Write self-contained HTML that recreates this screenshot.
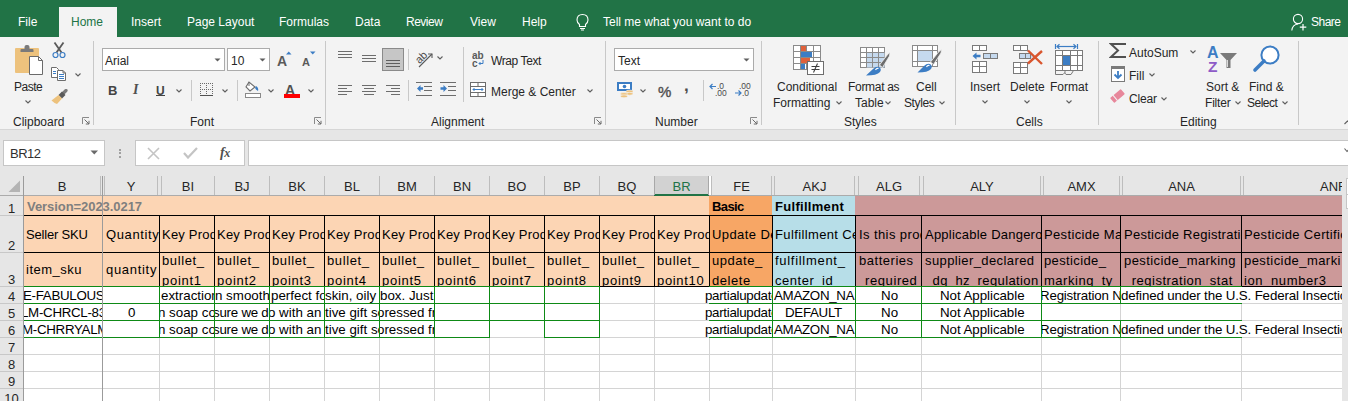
<!DOCTYPE html>
<html><head><meta charset="utf-8"><style>
html,body{margin:0;padding:0;}
body{width:1348px;height:401px;overflow:hidden;position:relative;background:#E6E6E6;font-family:"Liberation Sans",sans-serif;}
.t{position:absolute;line-height:1;white-space:pre;}
.r{position:absolute;display:block;}
.c{position:absolute;overflow:hidden;}
.c>span{position:absolute;line-height:1;white-space:pre;}
</style></head><body>
<div class="r" style="left:0px;top:0px;width:1348px;height:37px;background:#217346;"></div>
<div class="r" style="left:59px;top:7px;width:58px;height:30px;background:#F3F3F3;"></div>
<div class="t" style="left:18px;top:16px;font-size:12px;color:#FFFFFF;font-weight:400;">File</div>
<div class="t" style="left:131px;top:16px;font-size:12px;color:#FFFFFF;font-weight:400;">Insert</div>
<div class="t" style="left:187px;top:16px;font-size:12px;color:#FFFFFF;font-weight:400;">Page Layout</div>
<div class="t" style="left:279px;top:16px;font-size:12px;color:#FFFFFF;font-weight:400;">Formulas</div>
<div class="t" style="left:355px;top:16px;font-size:12px;color:#FFFFFF;font-weight:400;">Data</div>
<div class="t" style="left:406px;top:16px;font-size:12px;color:#FFFFFF;font-weight:400;letter-spacing:-0.5px">Review</div>
<div class="t" style="left:470px;top:16px;font-size:12px;color:#FFFFFF;font-weight:400;">View</div>
<div class="t" style="left:522px;top:16px;font-size:12px;color:#FFFFFF;font-weight:400;">Help</div>
<div class="t" style="left:603px;top:16px;font-size:12px;color:#FFFFFF;font-weight:400;">Tell me what you want to do</div>
<div class="t" style="left:1311px;top:16px;font-size:12px;color:#FFFFFF;font-weight:400;letter-spacing:-0.5px">Share</div>
<div class="t" style="left:71px;top:16px;font-size:12px;color:#217346;font-weight:400;">Home</div>
<div class="r" style="left:0px;top:37px;width:1348px;height:92px;background:#F3F3F3;"></div>
<div class="r" style="left:0px;top:129px;width:1348px;height:1px;background:#D6D6D6;"></div>
<div class="r" style="left:93px;top:41px;width:1px;height:84px;background:#C8C8C8;"></div>
<div class="r" style="left:325px;top:41px;width:1px;height:84px;background:#C8C8C8;"></div>
<div class="r" style="left:605px;top:41px;width:1px;height:84px;background:#C8C8C8;"></div>
<div class="r" style="left:761px;top:41px;width:1px;height:84px;background:#C8C8C8;"></div>
<div class="r" style="left:955px;top:41px;width:1px;height:84px;background:#C8C8C8;"></div>
<div class="r" style="left:1098px;top:41px;width:1px;height:84px;background:#C8C8C8;"></div>
<div class="r" style="left:1298px;top:41px;width:1px;height:84px;background:#C8C8C8;"></div>
<div class="t" style="left:13px;top:116px;font-size:12px;color:#262626;font-weight:400;">Clipboard</div>
<div class="t" style="left:190px;top:116px;font-size:12px;color:#262626;font-weight:400;">Font</div>
<div class="t" style="left:431px;top:116px;font-size:12px;color:#262626;font-weight:400;">Alignment</div>
<div class="t" style="left:655px;top:116px;font-size:12px;color:#262626;font-weight:400;">Number</div>
<div class="t" style="left:844px;top:116px;font-size:12px;color:#262626;font-weight:400;">Styles</div>
<div class="t" style="left:1016px;top:116px;font-size:12px;color:#262626;font-weight:400;">Cells</div>
<div class="t" style="left:1180px;top:116px;font-size:12px;color:#262626;font-weight:400;">Editing</div>
<svg class="r" style="left:82px;top:117px;" width="8" height="8" viewBox="0 0 8 8"><path d="M0.5,7 V0.5 H7" fill="none" stroke="#8A8A8A" stroke-width="1"/><path d="M2.5,2.5 L7,7 M7,3.8 V7 H3.8" fill="none" stroke="#6A6A6A" stroke-width="1"/></svg>
<svg class="r" style="left:314px;top:117px;" width="8" height="8" viewBox="0 0 8 8"><path d="M0.5,7 V0.5 H7" fill="none" stroke="#8A8A8A" stroke-width="1"/><path d="M2.5,2.5 L7,7 M7,3.8 V7 H3.8" fill="none" stroke="#6A6A6A" stroke-width="1"/></svg>
<svg class="r" style="left:594px;top:117px;" width="8" height="8" viewBox="0 0 8 8"><path d="M0.5,7 V0.5 H7" fill="none" stroke="#8A8A8A" stroke-width="1"/><path d="M2.5,2.5 L7,7 M7,3.8 V7 H3.8" fill="none" stroke="#6A6A6A" stroke-width="1"/></svg>
<svg class="r" style="left:750px;top:117px;" width="8" height="8" viewBox="0 0 8 8"><path d="M0.5,7 V0.5 H7" fill="none" stroke="#8A8A8A" stroke-width="1"/><path d="M2.5,2.5 L7,7 M7,3.8 V7 H3.8" fill="none" stroke="#6A6A6A" stroke-width="1"/></svg>
<svg class="r" style="left:1344px;top:120px;" width="7" height="5" viewBox="0 0 7 5"><polyline points="0.5,4 3.5,1 6.5,4" fill="none" stroke="#5F5F5F" stroke-width="1.1"/></svg>
<svg class="r" style="left:14px;top:44px;" width="30" height="32" viewBox="0 0 30 32">
<rect x="1" y="4" width="24" height="25" rx="1" fill="#EDC27D"/>
<path d="M6.5,8 V6 Q6.5,5 7.5,5 H10.5 V3 Q10.5,1 12.5,1 H13.5 Q15.5,1 15.5,3 V5 H18.5 Q19.5,5 19.5,6 V8 Z" fill="#7A7A7A"/>
<path d="M15.5,12.5 H24.5 L28.5,16.5 V30.5 H15.5 Z" fill="#FFFFFF" stroke="#6A6A6A" stroke-width="1"/>
<path d="M24.5,12.5 V16.5 H28.5" fill="none" stroke="#6A6A6A" stroke-width="1"/>
</svg>
<div class="t" style="left:14px;top:81px;font-size:12px;color:#262626;font-weight:400;letter-spacing:-0.5px">Paste</div>
<svg class="r" style="left:25px;top:100px;" width="6" height="4" viewBox="0 0 6 4"><polyline points="0.5,0.5 3.0,3 5.5,0.5" fill="none" stroke="#5F5F5F" stroke-width="1.1"/></svg>
<svg class="r" style="left:51px;top:42px;" width="16" height="17" viewBox="0 0 16 17">
<path d="M3.5,0.5 L10.5,10.5 M12.5,0.5 L5.5,10.5" stroke="#5A5A5A" stroke-width="1.8" fill="none"/>
<circle cx="4.5" cy="13" r="2.5" fill="#F3F3F3" stroke="#3C7DC4" stroke-width="1.2"/>
<circle cx="11.5" cy="13" r="2.5" fill="#F3F3F3" stroke="#3C7DC4" stroke-width="1.2"/>
</svg>
<svg class="r" style="left:50px;top:66px;" width="17" height="16" viewBox="0 0 17 16">
<path d="M1.5,1.5 H6.5 L8.5,3.5 V11.5 H1.5 Z" fill="#FFFFFF" stroke="#6D6D6D" stroke-width="1"/>
<path d="M7.5,4.5 H13 L15.5,7 V14.5 H7.5 Z" fill="#FFFFFF" stroke="#6D6D6D" stroke-width="1"/>
<path d="M13,4.5 V7 H15.5" fill="none" stroke="#6D6D6D" stroke-width="1"/>
<path d="M3,5.5 H6 M3,7.5 H6 M9,8.5 H14 M9,10.5 H14 M9,12.5 H14" stroke="#3C7DC4" stroke-width="1"/>
</svg>
<svg class="r" style="left:75px;top:73px;" width="6" height="4" viewBox="0 0 6 4"><polyline points="0.5,0.5 3.0,3 5.5,0.5" fill="none" stroke="#5F5F5F" stroke-width="1.1"/></svg>
<svg class="r" style="left:51px;top:89px;" width="17" height="16" viewBox="0 0 17 16">
<path d="M12,4.5 L15,1.5" stroke="#7A7A7A" stroke-width="3.2" stroke-linecap="round"/>
<path d="M7.5,6 L11,2.5 L14.5,6 L11,9.5 Z" fill="#5A5A5A"/>
<path d="M7.5,6 L11,9.5 L6,15 Q3,14 0.5,11.5 Z" fill="#EDC27D"/>
</svg>
<div class="r" style="left:102px;top:48px;width:123px;height:23px;background:#FFFFFF;box-sizing:border-box;border:1px solid #ABABAB"></div>
<div class="t" style="left:105px;top:55px;font-size:12px;color:#262626;font-weight:400;">Arial</div>
<svg class="r" style="left:214px;top:58px;" width="7" height="4" viewBox="0 0 7 4"><path d="M0.5,0.5 H6.5 L3.5,3.5 Z" fill="#5F5F5F"/></svg>
<div class="r" style="left:227px;top:48px;width:43px;height:23px;background:#FFFFFF;box-sizing:border-box;border:1px solid #ABABAB"></div>
<div class="t" style="left:231px;top:55px;font-size:12px;color:#262626;font-weight:400;">10</div>
<svg class="r" style="left:259px;top:58px;" width="7" height="4" viewBox="0 0 7 4"><path d="M0.5,0.5 H6.5 L3.5,3.5 Z" fill="#5F5F5F"/></svg>
<div class="t" style="left:277px;top:54px;font-size:14px;color:#5A5A5A;font-weight:700;font-size:14px">A</div>
<svg class="r" style="left:286px;top:51px;" width="6" height="4" viewBox="0 0 6 4"><path d="M0,3.5 H5.5 L2.75,0.5 Z" fill="#3C7DC4"/></svg>
<div class="t" style="left:302px;top:57px;font-size:11px;color:#5A5A5A;font-weight:700;">A</div>
<svg class="r" style="left:310px;top:51px;" width="6" height="4" viewBox="0 0 6 4"><path d="M0,0.5 H5.5 L2.75,3.5 Z" fill="#3C7DC4"/></svg>
<div class="t" style="left:108px;top:85px;font-size:12px;color:#444444;font-weight:700;font-size:13px;top:84px">B</div>
<div class="t" style="left:133px;top:85px;font-size:12px;color:#505050;font-weight:700;font-style:italic;font-family:'Liberation Serif';font-size:14px;top:83px">I</div>
<div class="t" style="left:156px;top:85px;font-size:12px;color:#444444;font-weight:700;">U</div>
<div class="r" style="left:156px;top:95px;width:9px;height:1px;background:#444444;"></div>
<svg class="r" style="left:176px;top:89px;" width="6" height="4" viewBox="0 0 6 4"><polyline points="0.5,0.5 3.0,3 5.5,0.5" fill="none" stroke="#5F5F5F" stroke-width="1.1"/></svg>
<div class="r" style="left:191px;top:80px;width:1px;height:21px;background:#C8C8C8;"></div>
<svg class="r" style="left:199px;top:82px;" width="15" height="15" viewBox="0 0 15 15"><rect x="1" y="1" width="1" height="1" fill="#6A6A6A"/><rect x="3" y="1" width="1" height="1" fill="#6A6A6A"/><rect x="5" y="1" width="1" height="1" fill="#6A6A6A"/><rect x="7" y="1" width="1" height="1" fill="#6A6A6A"/><rect x="9" y="1" width="1" height="1" fill="#6A6A6A"/><rect x="11" y="1" width="1" height="1" fill="#6A6A6A"/><rect x="13" y="1" width="1" height="1" fill="#6A6A6A"/><rect x="1" y="7" width="1" height="1" fill="#6A6A6A"/><rect x="3" y="7" width="1" height="1" fill="#6A6A6A"/><rect x="5" y="7" width="1" height="1" fill="#6A6A6A"/><rect x="7" y="7" width="1" height="1" fill="#6A6A6A"/><rect x="9" y="7" width="1" height="1" fill="#6A6A6A"/><rect x="11" y="7" width="1" height="1" fill="#6A6A6A"/><rect x="13" y="7" width="1" height="1" fill="#6A6A6A"/><rect x="1" y="3" width="1" height="1" fill="#6A6A6A"/><rect x="1" y="5" width="1" height="1" fill="#6A6A6A"/><rect x="1" y="7" width="1" height="1" fill="#6A6A6A"/><rect x="1" y="9" width="1" height="1" fill="#6A6A6A"/><rect x="1" y="11" width="1" height="1" fill="#6A6A6A"/><rect x="7" y="3" width="1" height="1" fill="#6A6A6A"/><rect x="7" y="5" width="1" height="1" fill="#6A6A6A"/><rect x="7" y="7" width="1" height="1" fill="#6A6A6A"/><rect x="7" y="9" width="1" height="1" fill="#6A6A6A"/><rect x="7" y="11" width="1" height="1" fill="#6A6A6A"/><rect x="13" y="3" width="1" height="1" fill="#6A6A6A"/><rect x="13" y="5" width="1" height="1" fill="#6A6A6A"/><rect x="13" y="7" width="1" height="1" fill="#6A6A6A"/><rect x="13" y="9" width="1" height="1" fill="#6A6A6A"/><rect x="13" y="11" width="1" height="1" fill="#6A6A6A"/><rect x="1" y="13" width="13" height="1" fill="#505050"/></svg>
<svg class="r" style="left:222px;top:89px;" width="6" height="4" viewBox="0 0 6 4"><polyline points="0.5,0.5 3.0,3 5.5,0.5" fill="none" stroke="#5F5F5F" stroke-width="1.1"/></svg>
<div class="r" style="left:237px;top:80px;width:1px;height:21px;background:#C8C8C8;"></div>
<svg class="r" style="left:244px;top:81px;" width="18" height="17" viewBox="0 0 18 17">
<path d="M5,1 L2,6 L6,10 L11,6 Z" fill="#FFFFFF" stroke="#6D6D6D" stroke-width="1.1"/>
<path d="M5,1 V5" stroke="#6D6D6D" stroke-width="1"/>
<path d="M12,5 Q15,7 14,10 Q12,9 11,7 Z" fill="#3C7DC4"/>
<rect x="1.5" y="12.5" width="15" height="4" fill="#FFFFFF" stroke="#8A8A8A" stroke-width="1"/>
</svg>
<svg class="r" style="left:268px;top:89px;" width="6" height="4" viewBox="0 0 6 4"><polyline points="0.5,0.5 3.0,3 5.5,0.5" fill="none" stroke="#5F5F5F" stroke-width="1.1"/></svg>
<div class="t" style="left:285px;top:83px;font-size:13px;color:#505050;font-weight:700;font-size:14px;top:83px">A</div>
<div class="r" style="left:284px;top:94px;width:16px;height:4px;background:#FF0000;"></div>
<svg class="r" style="left:308px;top:89px;" width="6" height="4" viewBox="0 0 6 4"><polyline points="0.5,0.5 3.0,3 5.5,0.5" fill="none" stroke="#5F5F5F" stroke-width="1.1"/></svg>
<div class="r" style="left:338px;top:51px;width:14px;height:1px;background:#6D6D6D;"></div>
<div class="r" style="left:338px;top:54px;width:14px;height:1px;background:#6D6D6D;"></div>
<div class="r" style="left:338px;top:57px;width:14px;height:1px;background:#6D6D6D;"></div>
<div class="r" style="left:362px;top:55px;width:14px;height:1px;background:#6D6D6D;"></div>
<div class="r" style="left:362px;top:58px;width:14px;height:1px;background:#6D6D6D;"></div>
<div class="r" style="left:362px;top:61px;width:14px;height:1px;background:#6D6D6D;"></div>
<div class="r" style="left:382px;top:48px;width:22px;height:23px;background:#C6C6C6;box-sizing:border-box;border:1px solid #8A8A8A"></div>
<div class="r" style="left:386px;top:60px;width:14px;height:1px;background:#5F5F5F;"></div>
<div class="r" style="left:386px;top:63px;width:14px;height:1px;background:#5F5F5F;"></div>
<div class="r" style="left:386px;top:66px;width:14px;height:1px;background:#5F5F5F;"></div>
<div class="r" style="left:408px;top:49px;width:1px;height:21px;background:#C8C8C8;"></div>
<svg class="r" style="left:414px;top:49px;" width="21" height="20" viewBox="0 0 21 20">
<g transform="translate(9,9) rotate(-45)"><text x="-7" y="2" font-family="Liberation Sans" font-size="11" fill="#4A4A4A">ab</text></g>
<path d="M5,18 L18,5" stroke="#5A5A5A" stroke-width="1.1"/>
<path d="M14,5 H18 V9" fill="none" stroke="#5A5A5A" stroke-width="1.1"/>
</svg>
<svg class="r" style="left:437px;top:56px;" width="6" height="4" viewBox="0 0 6 4"><polyline points="0.5,0.5 3.0,3 5.5,0.5" fill="none" stroke="#5F5F5F" stroke-width="1.1"/></svg>
<div class="r" style="left:338px;top:85px;width:14px;height:1px;background:#6D6D6D;"></div>
<div class="r" style="left:338px;top:88px;width:9px;height:1px;background:#6D6D6D;"></div>
<div class="r" style="left:338px;top:91px;width:14px;height:1px;background:#6D6D6D;"></div>
<div class="r" style="left:338px;top:94px;width:9px;height:1px;background:#6D6D6D;"></div>
<div class="r" style="left:362px;top:85px;width:14px;height:1px;background:#6D6D6D;"></div>
<div class="r" style="left:362px;top:91px;width:14px;height:1px;background:#6D6D6D;"></div>
<div class="r" style="left:364px;top:88px;width:10px;height:1px;background:#6D6D6D;"></div>
<div class="r" style="left:364px;top:94px;width:10px;height:1px;background:#6D6D6D;"></div>
<div class="r" style="left:386px;top:85px;width:14px;height:1px;background:#6D6D6D;"></div>
<div class="r" style="left:386px;top:91px;width:14px;height:1px;background:#6D6D6D;"></div>
<div class="r" style="left:391px;top:88px;width:9px;height:1px;background:#6D6D6D;"></div>
<div class="r" style="left:391px;top:94px;width:9px;height:1px;background:#6D6D6D;"></div>
<div class="r" style="left:408px;top:80px;width:1px;height:21px;background:#C8C8C8;"></div>
<svg class="r" style="left:416px;top:82px;" width="17" height="15" viewBox="0 0 17 15">
<path d="M0,0.5 H16 M8,4.5 H16 M8,8.5 H16 M0,13.5 H16" stroke="#6D6D6D" stroke-width="1"/>
<path d="M1,6.5 L4.5,3 V5.2 H7 V7.8 H4.5 V10 Z" fill="#3C7DC4"/>
</svg>
<svg class="r" style="left:440px;top:82px;" width="17" height="15" viewBox="0 0 17 15">
<path d="M0,0.5 H16 M8,4.5 H16 M8,8.5 H16 M0,13.5 H16" stroke="#6D6D6D" stroke-width="1"/>
<path d="M7,6.5 L3.5,3 V5.2 H0.5 V7.8 H3.5 V10 Z" fill="#3C7DC4"/>
</svg>
<div class="r" style="left:463px;top:47px;width:1px;height:55px;background:#C8C8C8;"></div>
<svg class="r" style="left:472px;top:51px;" width="14" height="16" viewBox="0 0 14 16">
<text x="0" y="7.5" font-family="Liberation Sans" font-size="10" font-weight="700" fill="#5A5A5A">ab</text>
<text x="0" y="15.5" font-family="Liberation Sans" font-size="10" font-weight="700" fill="#5A5A5A">c</text>
<path d="M11,9 V12.5 H7" fill="none" stroke="#3C7DC4" stroke-width="1"/>
<path d="M8.5,11 L7,12.5 L8.5,14" fill="none" stroke="#3C7DC4" stroke-width="1"/>
</svg>
<div class="t" style="left:491px;top:55px;font-size:12px;color:#262626;font-weight:400;letter-spacing:-0.4px">Wrap Text</div>
<svg class="r" style="left:470px;top:82px;" width="17" height="15" viewBox="0 0 17 15">
<rect x="0.5" y="0.5" width="15" height="14" fill="#FFFFFF" stroke="#6D6D6D" stroke-width="1"/>
<path d="M0.5,4.5 H15.5 M0.5,10.5 H15.5 M8,0.5 V4.5 M8,10.5 V14.5" stroke="#6D6D6D" stroke-width="1"/>
<path d="M3,7.5 H13" stroke="#3C7DC4" stroke-width="1"/>
<path d="M4.5,6 L3,7.5 L4.5,9 M11.5,6 L13,7.5 L11.5,9" fill="none" stroke="#3C7DC4" stroke-width="1"/>
</svg>
<div class="t" style="left:491px;top:86px;font-size:12px;color:#262626;font-weight:400;">Merge &amp; Center</div>
<svg class="r" style="left:587px;top:89px;" width="6" height="4" viewBox="0 0 6 4"><polyline points="0.5,0.5 3.0,3 5.5,0.5" fill="none" stroke="#5F5F5F" stroke-width="1.1"/></svg>
<div class="r" style="left:614px;top:48px;width:140px;height:23px;background:#FFFFFF;box-sizing:border-box;border:1px solid #ABABAB"></div>
<div class="t" style="left:618px;top:55px;font-size:12px;color:#262626;font-weight:400;">Text</div>
<svg class="r" style="left:743px;top:58px;" width="7" height="4" viewBox="0 0 7 4"><path d="M0.5,0.5 H6.5 L3.5,3.5 Z" fill="#5F5F5F"/></svg>
<svg class="r" style="left:616px;top:81px;" width="18" height="17" viewBox="0 0 18 17">
<rect x="1" y="1" width="15" height="9" fill="#3C7DC4"/>
<rect x="3" y="3" width="11" height="5" fill="#FFFFFF"/>
<circle cx="8.5" cy="5.5" r="1.8" fill="#3C7DC4"/>
<ellipse cx="13.5" cy="10.5" rx="3.5" ry="1.4" fill="#EDC27D" stroke="#F3F3F3" stroke-width="0.6"/>
<ellipse cx="13.5" cy="12.8" rx="3.5" ry="1.4" fill="#EDC27D" stroke="#F3F3F3" stroke-width="0.6"/>
<ellipse cx="8" cy="13" rx="3.5" ry="1.4" fill="#EDC27D" stroke="#F3F3F3" stroke-width="0.6"/>
<ellipse cx="8" cy="15.3" rx="3.5" ry="1.4" fill="#EDC27D" stroke="#F3F3F3" stroke-width="0.6"/>
</svg>
<svg class="r" style="left:640px;top:89px;" width="6" height="4" viewBox="0 0 6 4"><polyline points="0.5,0.5 3.0,3 5.5,0.5" fill="none" stroke="#5F5F5F" stroke-width="1.1"/></svg>
<div class="t" style="left:658px;top:85px;font-size:14px;color:#505050;font-weight:400;font-size:15px;top:84px;-webkit-text-stroke:0.4px #505050">%</div>
<div class="t" style="left:684px;top:81px;font-size:14px;color:#4A4A4A;font-weight:700;font-size:17px;top:77px">,</div>
<div class="r" style="left:703px;top:80px;width:1px;height:21px;background:#C8C8C8;"></div>
<svg class="r" style="left:709px;top:82px;" width="18" height="15" viewBox="0 0 18 15">
<text x="8" y="7" font-family="Liberation Sans" font-size="8.5" fill="#4A4A4A">.0</text>
<text x="6" y="14" font-family="Liberation Sans" font-size="8.5" fill="#4A4A4A">.00</text>
<path d="M1,4.5 H7 M3.5,2 L1,4.5 L3.5,7" fill="none" stroke="#3C7DC4" stroke-width="1.2"/>
</svg>
<svg class="r" style="left:734px;top:82px;" width="18" height="15" viewBox="0 0 18 15">
<text x="5" y="7" font-family="Liberation Sans" font-size="8.5" fill="#4A4A4A">.00</text>
<text x="8" y="14" font-family="Liberation Sans" font-size="8.5" fill="#4A4A4A">.0</text>
<path d="M1,11 H7 M4.5,8.5 L7,11 L4.5,13.5" fill="none" stroke="#3C7DC4" stroke-width="1.2"/>
</svg>
<svg class="r" style="left:792px;top:44px;" width="33" height="33" viewBox="0 0 33 33">
<rect x="1.5" y="1.5" width="27" height="24" fill="#FFFFFF" stroke="#8A8A8A" stroke-width="1"/>
<path d="M1.5,7.5 H28.5 M1.5,13.5 H28.5 M1.5,19.5 H28.5 M8.5,1.5 V25.5 M14.5,1.5 V25.5 M21.5,1.5 V25.5" stroke="#8A8A8A" stroke-width="1"/>
<rect x="9" y="2" width="5" height="5" fill="#E0613A"/>
<rect x="9" y="8" width="11" height="5" fill="#3C7DC4"/>
<rect x="9" y="14" width="9" height="5" fill="#E0613A"/>
<rect x="9" y="20" width="4" height="5" fill="#3C7DC4"/>
<rect x="15.5" y="17.5" width="16" height="13" fill="#FFFFFF" stroke="#6D6D6D" stroke-width="1"/>
<path d="M19.5,22.5 H27.5 M19.5,25.5 H27.5 M25.5,19.5 L21.5,28.5" stroke="#404040" stroke-width="1.1"/>
</svg>
<div class="t" style="left:777px;top:81px;font-size:12px;color:#262626;font-weight:400;">Conditional</div>
<div class="t" style="left:773px;top:97px;font-size:12px;color:#262626;font-weight:400;">Formatting</div>
<svg class="r" style="left:836px;top:101px;" width="6" height="4" viewBox="0 0 6 4"><polyline points="0.5,0.5 3.0,3 5.5,0.5" fill="none" stroke="#5F5F5F" stroke-width="1.1"/></svg>
<svg class="r" style="left:859px;top:46px;" width="32" height="31" viewBox="0 0 32 31">
<rect x="1.5" y="1.5" width="24" height="20" fill="#FFFFFF" stroke="#8A8A8A" stroke-width="1"/>
<rect x="7.5" y="6.5" width="18" height="15" fill="#C5D9EE"/>
<path d="M1.5,6.5 H25.5 M1.5,11.5 H25.5 M1.5,16.5 H25.5 M7.5,1.5 V21.5 M13.5,1.5 V21.5 M19.5,1.5 V21.5" stroke="#8A8A8A" stroke-width="1"/>
<path d="M20.5,19 L29,8 L31,6.5 L30.5,10 L23.5,21.5 Z" fill="#6D6D6D" stroke="#F3F3F3" stroke-width="0.8"/>
<path d="M7,29.5 L14,23 Q17,20 20,21 Q23,23 21,26 Q18,29.5 7,29.5 Z" fill="#3C7DC4"/>
<path d="M16.5,24 Q17.5,22 19.5,22.5" stroke="#FFFFFF" stroke-width="1.2" fill="none"/>
</svg>
<div class="t" style="left:848px;top:81px;font-size:12px;color:#262626;font-weight:400;letter-spacing:-0.3px">Format as</div>
<div class="t" style="left:855px;top:97px;font-size:12px;color:#262626;font-weight:400;">Table</div>
<svg class="r" style="left:885px;top:101px;" width="6" height="4" viewBox="0 0 6 4"><polyline points="0.5,0.5 3.0,3 5.5,0.5" fill="none" stroke="#5F5F5F" stroke-width="1.1"/></svg>
<svg class="r" style="left:911px;top:44px;" width="32" height="31" viewBox="0 0 32 31">
<rect x="1.5" y="1.5" width="25" height="21" fill="#FFFFFF" stroke="#8A8A8A" stroke-width="1"/>
<path d="M1.5,6.5 H26.5 M1.5,17.5 H26.5 M6.5,1.5 V22.5 M21.5,1.5 V22.5" stroke="#8A8A8A" stroke-width="1"/>
<rect x="7" y="7" width="14" height="10" fill="#C5D9EE"/>
<path d="M19.5,18 L28,7.5 L30.5,5.5 L30,9 L22.5,20.5 Z" fill="#6D6D6D" stroke="#F3F3F3" stroke-width="0.8"/>
<path d="M6.5,28.5 L13,22 Q16,19 19,20 Q22,22 20,25 Q17,28.5 6.5,28.5 Z" fill="#3C7DC4"/>
<path d="M15.5,23 Q16.5,21 18.5,21.5" stroke="#FFFFFF" stroke-width="1.2" fill="none"/>
</svg>
<div class="t" style="left:916px;top:81px;font-size:12px;color:#262626;font-weight:400;">Cell</div>
<div class="t" style="left:904px;top:97px;font-size:12px;color:#262626;font-weight:400;letter-spacing:-0.4px">Styles</div>
<svg class="r" style="left:939px;top:101px;" width="6" height="4" viewBox="0 0 6 4"><polyline points="0.5,0.5 3.0,3 5.5,0.5" fill="none" stroke="#5F5F5F" stroke-width="1.1"/></svg>
<svg class="r" style="left:971px;top:44px;" width="28" height="30" viewBox="0 0 28 30">
<rect x="1.5" y="1.5" width="14" height="5" fill="#FFFFFF" stroke="#7A7A7A" stroke-width="1"/>
<path d="M8.5,1.5 V6.5" stroke="#7A7A7A"/>
<rect x="12.5" y="9.5" width="14" height="5" fill="#C5D9EE" stroke="#7A7A7A" stroke-width="1"/>
<path d="M19.5,9.5 V14.5" stroke="#7A7A7A"/>
<path d="M1.5,12 L5.5,8.5 V10.8 H9.5 V13.2 H5.5 V15.5 Z" fill="#3C7DC4"/>
<rect x="1.5" y="17.5" width="14" height="11" fill="#FFFFFF" stroke="#7A7A7A" stroke-width="1"/>
<path d="M1.5,22.5 H15.5 M8.5,17.5 V28.5" stroke="#7A7A7A"/>
</svg>
<div class="t" style="left:970px;top:81px;font-size:12px;color:#262626;font-weight:400;">Insert</div>
<svg class="r" style="left:982px;top:100px;" width="6" height="4" viewBox="0 0 6 4"><polyline points="0.5,0.5 3.0,3 5.5,0.5" fill="none" stroke="#5F5F5F" stroke-width="1.1"/></svg>
<svg class="r" style="left:1012px;top:44px;" width="32" height="31" viewBox="0 0 32 31">
<rect x="1.5" y="1.5" width="14" height="5" fill="#FFFFFF" stroke="#7A7A7A" stroke-width="1"/>
<path d="M8.5,1.5 V6.5" stroke="#7A7A7A"/>
<rect x="7.5" y="9.5" width="11" height="5" fill="#C5D9EE" stroke="#7A7A7A" stroke-width="1"/>
<path d="M13.5,9.5 V14.5" stroke="#7A7A7A"/>
<path d="M19,9.5 L22,12 L19,14.5 Z" fill="#C5D9EE"/>
<rect x="1.5" y="18.5" width="14" height="11" fill="#FFFFFF" stroke="#7A7A7A" stroke-width="1"/>
<path d="M1.5,23.5 H15.5 M8.5,18.5 V29.5" stroke="#7A7A7A"/>
<path d="M16,6.5 L30,20 M30,7 L16,19.5" stroke="#D9562E" stroke-width="2.4"/>
</svg>
<div class="t" style="left:1010px;top:81px;font-size:12px;color:#262626;font-weight:400;">Delete</div>
<svg class="r" style="left:1024px;top:100px;" width="6" height="4" viewBox="0 0 6 4"><polyline points="0.5,0.5 3.0,3 5.5,0.5" fill="none" stroke="#5F5F5F" stroke-width="1.1"/></svg>
<svg class="r" style="left:1054px;top:43px;" width="30" height="33" viewBox="0 0 30 33">
<path d="M1.5,1 V6 M23.5,1 V6" stroke="#3C7DC4" stroke-width="1.2"/>
<path d="M3,3.5 H22" stroke="#3C7DC4" stroke-width="1.2"/>
<path d="M5.5,1.2 L3,3.5 L5.5,5.8 M19.5,1.2 L22,3.5 L19.5,5.8" fill="none" stroke="#3C7DC4" stroke-width="1.2"/>
<rect x="1.5" y="7.5" width="27" height="20" fill="#FFFFFF" stroke="#7A7A7A" stroke-width="1"/>
<path d="M1.5,12.5 H28.5 M1.5,22.5 H28.5 M8.5,7.5 V27.5 M16.5,7.5 V27.5 M23.5,7.5 V27.5" stroke="#7A7A7A" stroke-width="1"/>
<rect x="9" y="13" width="7" height="9" fill="#3C7DC4"/>
<path d="M1.5,27.5 V31.5 H9 L11,29.5 V27.5 M10.5,29.5 L12,31.5 H17 L19.5,27.5" fill="none" stroke="#7A7A7A" stroke-width="1"/>
</svg>
<div class="t" style="left:1050px;top:81px;font-size:12px;color:#262626;font-weight:400;">Format</div>
<svg class="r" style="left:1066px;top:100px;" width="6" height="4" viewBox="0 0 6 4"><polyline points="0.5,0.5 3.0,3 5.5,0.5" fill="none" stroke="#5F5F5F" stroke-width="1.1"/></svg>
<svg class="r" style="left:1109px;top:42px;" width="18" height="17" viewBox="0 0 18 17"><path d="M16,3 V2 H2 L9,8.5 L2,15 H16 V14" fill="none" stroke="#505050" stroke-width="2" stroke-linejoin="miter"/></svg>
<div class="t" style="left:1129px;top:47px;font-size:12px;color:#262626;font-weight:400;">AutoSum</div>
<svg class="r" style="left:1190px;top:50px;" width="6" height="4" viewBox="0 0 6 4"><polyline points="0.5,0.5 3.0,3 5.5,0.5" fill="none" stroke="#5F5F5F" stroke-width="1.1"/></svg>
<svg class="r" style="left:1110px;top:65px;" width="16" height="18" viewBox="0 0 16 18">
<rect x="1.5" y="1.5" width="13" height="15" fill="#FFFFFF" stroke="#7A7A7A" stroke-width="1"/>
<rect x="1" y="1" width="14" height="3" fill="#7A7A7A"/>
<path d="M8,6 V13 M4.5,9.5 L8,13 L11.5,9.5" fill="none" stroke="#3C7DC4" stroke-width="1.8"/>
</svg>
<div class="t" style="left:1129px;top:70px;font-size:12px;color:#262626;font-weight:400;">Fill</div>
<svg class="r" style="left:1149px;top:73px;" width="6" height="4" viewBox="0 0 6 4"><polyline points="0.5,0.5 3.0,3 5.5,0.5" fill="none" stroke="#5F5F5F" stroke-width="1.1"/></svg>
<svg class="r" style="left:1109px;top:88px;" width="17" height="16" viewBox="0 0 17 16"><g transform="translate(8.5,8) rotate(-40)"><rect x="-7" y="-3.2" width="14" height="6.4" rx="0.8" fill="#E7879B"/><path d="M-3,-3.6 V3.6" stroke="#F3F3F3" stroke-width="1"/></g></svg>
<div class="t" style="left:1129px;top:93px;font-size:12px;color:#262626;font-weight:400;letter-spacing:-0.2px">Clear</div>
<svg class="r" style="left:1161px;top:97px;" width="6" height="4" viewBox="0 0 6 4"><polyline points="0.5,0.5 3.0,3 5.5,0.5" fill="none" stroke="#5F5F5F" stroke-width="1.1"/></svg>
<svg class="r" style="left:1207px;top:45px;" width="32" height="29" viewBox="0 0 32 29">
<text x="0" y="12.5" font-family="Liberation Sans" font-size="16" font-weight="700" fill="#3C7DC4">A</text>
<text x="1" y="27" font-family="Liberation Sans" font-size="15.5" font-weight="700" fill="#8E5BC7">Z</text>
<path d="M13,8 H30 L23.5,15 V23 H19.5 V15 Z" fill="#7A7A7A"/>
<path d="M20.5,15 V22" stroke="#F3F3F3" stroke-width="0.8"/>
</svg>
<div class="t" style="left:1206px;top:81px;font-size:12px;color:#262626;font-weight:400;">Sort &amp;</div>
<div class="t" style="left:1205px;top:97px;font-size:12px;color:#262626;font-weight:400;letter-spacing:-0.2px">Filter</div>
<svg class="r" style="left:1235px;top:101px;" width="6" height="4" viewBox="0 0 6 4"><polyline points="0.5,0.5 3.0,3 5.5,0.5" fill="none" stroke="#5F5F5F" stroke-width="1.1"/></svg>
<svg class="r" style="left:1252px;top:44px;" width="30" height="29" viewBox="0 0 30 29">
<circle cx="18" cy="11" r="8.6" fill="#FFFFFF" stroke="#3C7DC4" stroke-width="2"/>
<path d="M12,17 L3,26" stroke="#3C7DC4" stroke-width="3.6" stroke-linecap="round"/>
</svg>
<div class="t" style="left:1249px;top:81px;font-size:12px;color:#262626;font-weight:400;">Find &amp;</div>
<div class="t" style="left:1247px;top:97px;font-size:12px;color:#262626;font-weight:400;letter-spacing:-0.5px">Select</div>
<svg class="r" style="left:1282px;top:101px;" width="6" height="4" viewBox="0 0 6 4"><polyline points="0.5,0.5 3.0,3 5.5,0.5" fill="none" stroke="#5F5F5F" stroke-width="1.1"/></svg>
<svg class="r" style="left:575px;top:13px;" width="15" height="18" viewBox="0 0 15 18"><path d="M7.5,1.5 Q13,1.5 13,7 Q13,9.5 10.5,11.5 V13.5 H4.5 V11.5 Q2,9.5 2,7 Q2,1.5 7.5,1.5 Z" fill="none" stroke="#FFFFFF" stroke-width="1.1"/><path d="M5,15.5 H10 M6,17 H9" stroke="#FFFFFF" stroke-width="1"/></svg>
<svg class="r" style="left:1291px;top:13px;" width="17" height="18" viewBox="0 0 17 18"><circle cx="7" cy="6" r="4.6" fill="none" stroke="#FFFFFF" stroke-width="1.1"/><path d="M0.8,17.5 Q1.5,11.5 7,11" fill="none" stroke="#FFFFFF" stroke-width="1.1"/><path d="M12,11 V17.5 M8.8,14.2 H15.3" stroke="#FFFFFF" stroke-width="1.2"/></svg>
<div class="r" style="left:3px;top:140px;width:102px;height:26px;background:#FFFFFF;box-sizing:border-box;border:1px solid #C6C6C6"></div>
<div class="t" style="left:10px;top:147px;font-size:13px;color:#303030;font-weight:400;letter-spacing:-0.5px">BR12</div>
<svg class="r" style="left:90px;top:150px;" width="9" height="5" viewBox="0 0 9 5"><path d="M0.5,0.5 H8 L4.25,4.5 Z" fill="#6A6A6A"/></svg>
<div class="r" style="left:119px;top:149px;width:2px;height:2px;background:#A0A0A0;"></div>
<div class="r" style="left:119px;top:152px;width:2px;height:2px;background:#A0A0A0;"></div>
<div class="r" style="left:119px;top:156px;width:2px;height:2px;background:#A0A0A0;"></div>
<div class="r" style="left:135px;top:140px;width:110px;height:26px;background:#FFFFFF;box-sizing:border-box;border:1px solid #C6C6C6"></div>
<svg class="r" style="left:147px;top:147px;" width="13" height="13" viewBox="0 0 13 13"><path d="M1,1 L12,12 M12,1 L1,12" stroke="#C4C4C4" stroke-width="1.6"/></svg>
<svg class="r" style="left:183px;top:147px;" width="15" height="12" viewBox="0 0 15 12"><path d="M1,6 L5,10.5 L14,1" fill="none" stroke="#C4C4C4" stroke-width="2.2"/></svg>
<div class="t" style="left:220px;top:146px;font-size:14px;color:#505050;font-weight:700;font-family:'Liberation Serif';letter-spacing:-0.5px"><i>f</i><span style="font-size:12px;font-style:italic">x</span></div>
<div class="r" style="left:248px;top:140px;width:1100px;height:26px;background:#FFFFFF;box-sizing:border-box;border:1px solid #C6C6C6;border-right:none"></div>
<svg class="r" style="left:1344px;top:148px;" width="6" height="5" viewBox="0 0 6 5"><polyline points="0.5,0.5 3,3.5 5.5,0.5" fill="none" stroke="#5F5F5F" stroke-width="1.1"/></svg>
<div class="r" style="left:24px;top:196px;width:1318px;height:205px;background:#FFFFFF;"></div>
<div class="r" style="left:0px;top:176px;width:1342px;height:19px;background:#E6E6E6;"></div>
<div class="r" style="left:0px;top:195px;width:1342px;height:1px;background:#ABABAB;"></div>
<div class="r" style="left:1342px;top:176px;width:6px;height:225px;background:#E6E6E6;"></div>
<div class="r" style="left:1346px;top:178px;width:2px;height:31px;background:#FFFFFF;box-sizing:border-box;border:1px solid #C6C6C6;border-right:none"></div>
<div class="r" style="left:1347px;top:194px;width:1px;height:1px;background:#C6C6C6;"></div>
<div class="r" style="left:0px;top:196px;width:23px;height:205px;background:#E6E6E6;"></div>
<div class="r" style="left:23px;top:176px;width:1px;height:225px;background:#9B9B9B;"></div>
<svg class="r" style="left:8px;top:180px;" width="13" height="13" viewBox="0 0 13 13"><path d="M12,0.5 V12 H0.5 Z" fill="#B4B4B4"/></svg>
<div class="r" style="left:24px;top:196px;width:685px;height:90px;background:#FCD5B4;"></div>
<div class="r" style="left:709px;top:196px;width:63px;height:90px;background:#F7A665;"></div>
<div class="r" style="left:772px;top:196px;width:83px;height:90px;background:#B7DEE8;"></div>
<div class="r" style="left:855px;top:196px;width:487px;height:90px;background:#CC9999;"></div>
<div class="r" style="left:24px;top:303px;width:1318px;height:1px;background:#D4D4D4;"></div>
<div class="r" style="left:24px;top:320px;width:1318px;height:1px;background:#D4D4D4;"></div>
<div class="r" style="left:24px;top:337px;width:1318px;height:1px;background:#D4D4D4;"></div>
<div class="r" style="left:24px;top:354px;width:1318px;height:1px;background:#D4D4D4;"></div>
<div class="r" style="left:24px;top:371px;width:1318px;height:1px;background:#D4D4D4;"></div>
<div class="r" style="left:24px;top:388px;width:1318px;height:1px;background:#D4D4D4;"></div>
<div class="r" style="left:159px;top:286px;width:1px;height:115px;background:#D4D4D4;"></div>
<div class="r" style="left:214px;top:286px;width:1px;height:115px;background:#D4D4D4;"></div>
<div class="r" style="left:269px;top:286px;width:1px;height:115px;background:#D4D4D4;"></div>
<div class="r" style="left:324px;top:286px;width:1px;height:115px;background:#D4D4D4;"></div>
<div class="r" style="left:379px;top:286px;width:1px;height:115px;background:#D4D4D4;"></div>
<div class="r" style="left:434px;top:286px;width:1px;height:115px;background:#D4D4D4;"></div>
<div class="r" style="left:489px;top:286px;width:1px;height:115px;background:#D4D4D4;"></div>
<div class="r" style="left:544px;top:286px;width:1px;height:115px;background:#D4D4D4;"></div>
<div class="r" style="left:599px;top:286px;width:1px;height:115px;background:#D4D4D4;"></div>
<div class="r" style="left:654px;top:286px;width:1px;height:115px;background:#D4D4D4;"></div>
<div class="r" style="left:709px;top:337px;width:1px;height:64px;background:#D4D4D4;"></div>
<div class="r" style="left:772px;top:286px;width:1px;height:115px;background:#D4D4D4;"></div>
<div class="r" style="left:855px;top:286px;width:1px;height:115px;background:#D4D4D4;"></div>
<div class="r" style="left:921px;top:286px;width:1px;height:115px;background:#D4D4D4;"></div>
<div class="r" style="left:1041px;top:286px;width:1px;height:115px;background:#D4D4D4;"></div>
<div class="r" style="left:1120px;top:286px;width:1px;height:115px;background:#D4D4D4;"></div>
<div class="r" style="left:1241px;top:303px;width:1px;height:18px;background:#D4D4D4;"></div>
<div class="r" style="left:1241px;top:337px;width:1px;height:64px;background:#D4D4D4;"></div>
<div class="r" style="left:0px;top:215px;width:23px;height:1px;background:#C8C8C8;"></div>
<div class="r" style="left:0px;top:252px;width:23px;height:1px;background:#C8C8C8;"></div>
<div class="r" style="left:0px;top:286px;width:23px;height:1px;background:#C8C8C8;"></div>
<div class="r" style="left:0px;top:303px;width:23px;height:1px;background:#C8C8C8;"></div>
<div class="r" style="left:0px;top:320px;width:23px;height:1px;background:#C8C8C8;"></div>
<div class="r" style="left:0px;top:337px;width:23px;height:1px;background:#C8C8C8;"></div>
<div class="r" style="left:0px;top:354px;width:23px;height:1px;background:#C8C8C8;"></div>
<div class="r" style="left:0px;top:371px;width:23px;height:1px;background:#C8C8C8;"></div>
<div class="r" style="left:0px;top:388px;width:23px;height:1px;background:#C8C8C8;"></div>
<div class="r" style="left:24px;top:215px;width:1318px;height:1px;background:#000000;"></div>
<div class="r" style="left:24px;top:252px;width:1318px;height:1px;background:#000000;"></div>
<div class="r" style="left:24px;top:286px;width:1318px;height:1px;background:#000000;"></div>
<div class="r" style="left:159px;top:215px;width:1px;height:71px;background:#000000;"></div>
<div class="r" style="left:214px;top:215px;width:1px;height:71px;background:#000000;"></div>
<div class="r" style="left:269px;top:215px;width:1px;height:71px;background:#000000;"></div>
<div class="r" style="left:324px;top:215px;width:1px;height:71px;background:#000000;"></div>
<div class="r" style="left:379px;top:215px;width:1px;height:71px;background:#000000;"></div>
<div class="r" style="left:434px;top:215px;width:1px;height:71px;background:#000000;"></div>
<div class="r" style="left:489px;top:215px;width:1px;height:71px;background:#000000;"></div>
<div class="r" style="left:544px;top:215px;width:1px;height:71px;background:#000000;"></div>
<div class="r" style="left:599px;top:215px;width:1px;height:71px;background:#000000;"></div>
<div class="r" style="left:654px;top:215px;width:1px;height:71px;background:#000000;"></div>
<div class="r" style="left:709px;top:215px;width:1px;height:71px;background:#000000;"></div>
<div class="r" style="left:772px;top:215px;width:1px;height:71px;background:#000000;"></div>
<div class="r" style="left:855px;top:215px;width:1px;height:71px;background:#000000;"></div>
<div class="r" style="left:921px;top:215px;width:1px;height:71px;background:#000000;"></div>
<div class="r" style="left:1041px;top:215px;width:1px;height:71px;background:#000000;"></div>
<div class="r" style="left:1120px;top:215px;width:1px;height:71px;background:#000000;"></div>
<div class="r" style="left:1241px;top:215px;width:1px;height:71px;background:#000000;"></div>
<div class="r" style="left:24px;top:286px;width:466px;height:1px;background:#0E8A16;"></div>
<div class="r" style="left:24px;top:303px;width:466px;height:1px;background:#0E8A16;"></div>
<div class="r" style="left:24px;top:320px;width:466px;height:1px;background:#0E8A16;"></div>
<div class="r" style="left:24px;top:337px;width:466px;height:1px;background:#0E8A16;"></div>
<div class="r" style="left:544px;top:286px;width:56px;height:1px;background:#0E8A16;"></div>
<div class="r" style="left:544px;top:303px;width:56px;height:1px;background:#0E8A16;"></div>
<div class="r" style="left:544px;top:320px;width:56px;height:1px;background:#0E8A16;"></div>
<div class="r" style="left:544px;top:337px;width:56px;height:1px;background:#0E8A16;"></div>
<div class="r" style="left:489px;top:286px;width:56px;height:1px;background:#0E8A16;"></div>
<div class="r" style="left:489px;top:303px;width:56px;height:1px;background:#0E8A16;"></div>
<div class="r" style="left:489px;top:320px;width:56px;height:1px;background:#0E8A16;"></div>
<div class="r" style="left:709px;top:286px;width:533px;height:1px;background:#0E8A16;"></div>
<div class="r" style="left:709px;top:303px;width:533px;height:1px;background:#0E8A16;"></div>
<div class="r" style="left:709px;top:320px;width:533px;height:1px;background:#0E8A16;"></div>
<div class="r" style="left:709px;top:337px;width:533px;height:1px;background:#0E8A16;"></div>
<div class="r" style="left:159px;top:286px;width:1px;height:52px;background:#0E8A16;"></div>
<div class="r" style="left:214px;top:286px;width:1px;height:52px;background:#0E8A16;"></div>
<div class="r" style="left:269px;top:286px;width:1px;height:52px;background:#0E8A16;"></div>
<div class="r" style="left:324px;top:286px;width:1px;height:52px;background:#0E8A16;"></div>
<div class="r" style="left:379px;top:286px;width:1px;height:52px;background:#0E8A16;"></div>
<div class="r" style="left:434px;top:286px;width:1px;height:52px;background:#0E8A16;"></div>
<div class="r" style="left:489px;top:286px;width:1px;height:52px;background:#0E8A16;"></div>
<div class="r" style="left:544px;top:286px;width:1px;height:52px;background:#0E8A16;"></div>
<div class="r" style="left:599px;top:286px;width:1px;height:52px;background:#0E8A16;"></div>
<div class="r" style="left:772px;top:286px;width:1px;height:52px;background:#0E8A16;"></div>
<div class="r" style="left:855px;top:286px;width:1px;height:52px;background:#0E8A16;"></div>
<div class="r" style="left:921px;top:286px;width:1px;height:52px;background:#0E8A16;"></div>
<div class="r" style="left:1041px;top:286px;width:1px;height:52px;background:#0E8A16;"></div>
<div class="r" style="left:1120px;top:286px;width:1px;height:18px;background:#0E8A16;"></div>
<div class="r" style="left:1120px;top:320px;width:1px;height:18px;background:#0E8A16;"></div>
<div class="r" style="left:655px;top:176px;width:53px;height:19px;background:#D2D2D2;"></div>
<div class="r" style="left:654px;top:194px;width:55px;height:2px;background:#217346;"></div>
<div class="r" style="left:709px;top:176px;width:2px;height:19px;background:#FFFFFF;"></div>
<div class="t" style="left:24px;width:76px;top:180px;font-size:13px;text-align:center;color:#262626">B</div>
<div class="t" style="left:105px;width:52px;top:180px;font-size:13px;text-align:center;color:#262626">Y</div>
<div class="t" style="left:162px;width:52px;top:180px;font-size:13px;text-align:center;color:#262626">BI</div>
<div class="t" style="left:215px;width:54px;top:180px;font-size:13px;text-align:center;color:#262626">BJ</div>
<div class="t" style="left:270px;width:54px;top:180px;font-size:13px;text-align:center;color:#262626">BK</div>
<div class="t" style="left:325px;width:54px;top:180px;font-size:13px;text-align:center;color:#262626">BL</div>
<div class="t" style="left:380px;width:54px;top:180px;font-size:13px;text-align:center;color:#262626">BM</div>
<div class="t" style="left:435px;width:54px;top:180px;font-size:13px;text-align:center;color:#262626">BN</div>
<div class="t" style="left:490px;width:54px;top:180px;font-size:13px;text-align:center;color:#262626">BO</div>
<div class="t" style="left:545px;width:54px;top:180px;font-size:13px;text-align:center;color:#262626">BP</div>
<div class="t" style="left:600px;width:54px;top:180px;font-size:13px;text-align:center;color:#262626">BQ</div>
<div class="t" style="left:655px;width:53px;top:180px;font-size:13px;text-align:center;color:#217346">BR</div>
<div class="t" style="left:712px;width:59px;top:180px;font-size:13px;text-align:center;color:#262626">FE</div>
<div class="t" style="left:775px;width:79px;top:180px;font-size:13px;text-align:center;color:#262626">AKJ</div>
<div class="t" style="left:859px;width:60px;top:180px;font-size:13px;text-align:center;color:#262626">ALG</div>
<div class="t" style="left:924px;width:116px;top:180px;font-size:13px;text-align:center;color:#262626">ALY</div>
<div class="t" style="left:1044px;width:75px;top:180px;font-size:13px;text-align:center;color:#262626">AMX</div>
<div class="t" style="left:1123px;width:117px;top:180px;font-size:13px;text-align:center;color:#262626">ANA</div>
<div class="c" style="left:1244px;top:176px;width:98px;height:19px"><span style="left:76px;top:4px;font-size:13px;color:#262626">ANF</span></div>
<div class="r" style="left:100px;top:176px;width:1px;height:19px;background:#BDBDBD;"></div>
<div class="r" style="left:104px;top:176px;width:1px;height:19px;background:#BDBDBD;"></div>
<div class="r" style="left:157px;top:176px;width:1px;height:19px;background:#BDBDBD;"></div>
<div class="r" style="left:161px;top:176px;width:1px;height:19px;background:#BDBDBD;"></div>
<div class="r" style="left:214px;top:176px;width:1px;height:19px;background:#BDBDBD;"></div>
<div class="r" style="left:269px;top:176px;width:1px;height:19px;background:#BDBDBD;"></div>
<div class="r" style="left:324px;top:176px;width:1px;height:19px;background:#BDBDBD;"></div>
<div class="r" style="left:379px;top:176px;width:1px;height:19px;background:#BDBDBD;"></div>
<div class="r" style="left:434px;top:176px;width:1px;height:19px;background:#BDBDBD;"></div>
<div class="r" style="left:489px;top:176px;width:1px;height:19px;background:#BDBDBD;"></div>
<div class="r" style="left:544px;top:176px;width:1px;height:19px;background:#BDBDBD;"></div>
<div class="r" style="left:599px;top:176px;width:1px;height:19px;background:#BDBDBD;"></div>
<div class="r" style="left:654px;top:176px;width:1px;height:19px;background:#A8A8A8;"></div>
<div class="r" style="left:708px;top:176px;width:1px;height:19px;background:#A8A8A8;"></div>
<div class="r" style="left:711px;top:176px;width:1px;height:19px;background:#BDBDBD;"></div>
<div class="r" style="left:771px;top:176px;width:1px;height:19px;background:#BDBDBD;"></div>
<div class="r" style="left:774px;top:176px;width:1px;height:19px;background:#BDBDBD;"></div>
<div class="r" style="left:854px;top:176px;width:1px;height:19px;background:#BDBDBD;"></div>
<div class="r" style="left:858px;top:176px;width:1px;height:19px;background:#BDBDBD;"></div>
<div class="r" style="left:919px;top:176px;width:1px;height:19px;background:#BDBDBD;"></div>
<div class="r" style="left:923px;top:176px;width:1px;height:19px;background:#BDBDBD;"></div>
<div class="r" style="left:1040px;top:176px;width:1px;height:19px;background:#BDBDBD;"></div>
<div class="r" style="left:1043px;top:176px;width:1px;height:19px;background:#BDBDBD;"></div>
<div class="r" style="left:1119px;top:176px;width:1px;height:19px;background:#BDBDBD;"></div>
<div class="r" style="left:1122px;top:176px;width:1px;height:19px;background:#BDBDBD;"></div>
<div class="r" style="left:1240px;top:176px;width:1px;height:19px;background:#BDBDBD;"></div>
<div class="r" style="left:1243px;top:176px;width:1px;height:19px;background:#BDBDBD;"></div>
<div class="r" style="left:102px;top:176px;width:1px;height:225px;background:#9B9B9B;"></div>
<div class="t" style="left:0;width:23px;top:202px;font-size:13px;text-align:center;color:#262626">1</div>
<div class="t" style="left:0;width:23px;top:239px;font-size:13px;text-align:center;color:#262626">2</div>
<div class="t" style="left:0;width:23px;top:273px;font-size:13px;text-align:center;color:#262626">3</div>
<div class="t" style="left:0;width:23px;top:290px;font-size:13px;text-align:center;color:#262626">4</div>
<div class="t" style="left:0;width:23px;top:307px;font-size:13px;text-align:center;color:#262626">5</div>
<div class="t" style="left:0;width:23px;top:324px;font-size:13px;text-align:center;color:#262626">6</div>
<div class="t" style="left:0;width:23px;top:341px;font-size:13px;text-align:center;color:#262626">7</div>
<div class="t" style="left:0;width:23px;top:358px;font-size:13px;text-align:center;color:#262626">8</div>
<div class="t" style="left:0;width:23px;top:375px;font-size:13px;text-align:center;color:#262626">9</div>
<div class="t" style="left:0;width:23px;top:392px;font-size:13px;text-align:center;color:#262626">10</div>
<div class="c" style="left:24px;top:196px;width:685px;height:19px"><span style="left:3px;top:4px;font-size:13px;color:#7F7F7F;font-weight:700;letter-spacing:-0.06px">Version=2023.0217</span></div>
<div class="c" style="left:709px;top:196px;width:63px;height:19px"><span style="left:3px;top:4px;font-size:13px;color:#000000;font-weight:700;letter-spacing:-0.6px">Basic</span></div>
<div class="c" style="left:772px;top:196px;width:83px;height:19px"><span style="left:3px;top:4px;font-size:13px;color:#000000;font-weight:700;letter-spacing:0.3px">Fulfillment</span></div>
<div class="c" style="left:24px;top:216px;width:78px;height:36px"><span style="left:2px;top:12px;font-size:13px;color:#000000;font-weight:400;letter-spacing:-0.196px">Seller SKU</span></div>
<div class="c" style="left:103px;top:216px;width:56px;height:36px"><span style="left:3px;top:12px;font-size:13px;color:#000000;font-weight:400;letter-spacing:0.612px">Quantity</span></div>
<div class="c" style="left:160px;top:216px;width:54px;height:36px"><span style="left:2px;top:12px;font-size:13px;color:#000000;font-weight:400;letter-spacing:0.205px">Key Product Features</span></div>
<div class="c" style="left:215px;top:216px;width:54px;height:36px"><span style="left:2px;top:12px;font-size:13px;color:#000000;font-weight:400;letter-spacing:0.205px">Key Product Features</span></div>
<div class="c" style="left:270px;top:216px;width:54px;height:36px"><span style="left:2px;top:12px;font-size:13px;color:#000000;font-weight:400;letter-spacing:0.205px">Key Product Features</span></div>
<div class="c" style="left:325px;top:216px;width:54px;height:36px"><span style="left:2px;top:12px;font-size:13px;color:#000000;font-weight:400;letter-spacing:0.205px">Key Product Features</span></div>
<div class="c" style="left:380px;top:216px;width:54px;height:36px"><span style="left:2px;top:12px;font-size:13px;color:#000000;font-weight:400;letter-spacing:0.205px">Key Product Features</span></div>
<div class="c" style="left:435px;top:216px;width:54px;height:36px"><span style="left:2px;top:12px;font-size:13px;color:#000000;font-weight:400;letter-spacing:0.205px">Key Product Features</span></div>
<div class="c" style="left:490px;top:216px;width:54px;height:36px"><span style="left:2px;top:12px;font-size:13px;color:#000000;font-weight:400;letter-spacing:0.205px">Key Product Features</span></div>
<div class="c" style="left:545px;top:216px;width:54px;height:36px"><span style="left:2px;top:12px;font-size:13px;color:#000000;font-weight:400;letter-spacing:0.205px">Key Product Features</span></div>
<div class="c" style="left:600px;top:216px;width:54px;height:36px"><span style="left:2px;top:12px;font-size:13px;color:#000000;font-weight:400;letter-spacing:0.205px">Key Product Features</span></div>
<div class="c" style="left:655px;top:216px;width:54px;height:36px"><span style="left:2px;top:12px;font-size:13px;color:#000000;font-weight:400;letter-spacing:0.205px">Key Product Features</span></div>
<div class="c" style="left:710px;top:216px;width:62px;height:36px"><span style="left:2px;top:12px;font-size:13px;color:#000000;font-weight:400;letter-spacing:0.415px">Update Delete</span></div>
<div class="c" style="left:773px;top:216px;width:82px;height:36px"><span style="left:2px;top:12px;font-size:13px;color:#000000;font-weight:400;letter-spacing:0.372px">Fulfillment Center ID</span></div>
<div class="c" style="left:856px;top:216px;width:65px;height:36px"><span style="left:3px;top:12px;font-size:13px;color:#000000;font-weight:400;letter-spacing:0.409px">Is this product a battery</span></div>
<div class="c" style="left:922px;top:216px;width:119px;height:36px"><span style="left:3px;top:12px;font-size:13px;color:#000000;font-weight:400;letter-spacing:0.230px">Applicable Dangerous Goods</span></div>
<div class="c" style="left:1042px;top:216px;width:78px;height:36px"><span style="left:2px;top:12px;font-size:13px;color:#000000;font-weight:400;letter-spacing:0.346px">Pesticide Marking</span></div>
<div class="c" style="left:1121px;top:216px;width:120px;height:36px"><span style="left:3px;top:12px;font-size:13px;color:#000000;font-weight:400;letter-spacing:0.272px">Pesticide Registration</span></div>
<div class="c" style="left:1242px;top:216px;width:100px;height:36px"><span style="left:2px;top:12px;font-size:13px;color:#000000;font-weight:400;letter-spacing:0.348px">Pesticide Certification</span></div>
<div class="c" style="left:24px;top:253px;width:78px;height:33px"><span style="left:2px;top:10px;font-size:13px;color:#000000;font-weight:400;letter-spacing:0.489px">item_sku</span></div>
<div class="c" style="left:103px;top:253px;width:56px;height:33px"><span style="left:3px;top:10px;font-size:13px;color:#000000;font-weight:400;letter-spacing:0.695px">quantity</span></div>
<div class="c" style="left:160px;top:253px;width:54px;height:33px"><span style="left:2px;top:1px;font-size:13px;color:#000000;font-weight:400;letter-spacing:0.610px">bullet_</span></div>
<div class="c" style="left:160px;top:253px;width:54px;height:33px"><span style="left:2px;top:21px;font-size:13px;color:#000000;font-weight:400;letter-spacing:0.717px">point1</span></div>
<div class="c" style="left:215px;top:253px;width:54px;height:33px"><span style="left:2px;top:1px;font-size:13px;color:#000000;font-weight:400;letter-spacing:0.610px">bullet_</span></div>
<div class="c" style="left:215px;top:253px;width:54px;height:33px"><span style="left:2px;top:21px;font-size:13px;color:#000000;font-weight:400;letter-spacing:0.717px">point2</span></div>
<div class="c" style="left:270px;top:253px;width:54px;height:33px"><span style="left:2px;top:1px;font-size:13px;color:#000000;font-weight:400;letter-spacing:0.610px">bullet_</span></div>
<div class="c" style="left:270px;top:253px;width:54px;height:33px"><span style="left:2px;top:21px;font-size:13px;color:#000000;font-weight:400;letter-spacing:0.717px">point3</span></div>
<div class="c" style="left:325px;top:253px;width:54px;height:33px"><span style="left:2px;top:1px;font-size:13px;color:#000000;font-weight:400;letter-spacing:0.610px">bullet_</span></div>
<div class="c" style="left:325px;top:253px;width:54px;height:33px"><span style="left:2px;top:21px;font-size:13px;color:#000000;font-weight:400;letter-spacing:0.717px">point4</span></div>
<div class="c" style="left:380px;top:253px;width:54px;height:33px"><span style="left:2px;top:1px;font-size:13px;color:#000000;font-weight:400;letter-spacing:0.610px">bullet_</span></div>
<div class="c" style="left:380px;top:253px;width:54px;height:33px"><span style="left:2px;top:21px;font-size:13px;color:#000000;font-weight:400;letter-spacing:0.717px">point5</span></div>
<div class="c" style="left:435px;top:253px;width:54px;height:33px"><span style="left:2px;top:1px;font-size:13px;color:#000000;font-weight:400;letter-spacing:0.610px">bullet_</span></div>
<div class="c" style="left:435px;top:253px;width:54px;height:33px"><span style="left:2px;top:21px;font-size:13px;color:#000000;font-weight:400;letter-spacing:0.717px">point6</span></div>
<div class="c" style="left:490px;top:253px;width:54px;height:33px"><span style="left:2px;top:1px;font-size:13px;color:#000000;font-weight:400;letter-spacing:0.610px">bullet_</span></div>
<div class="c" style="left:490px;top:253px;width:54px;height:33px"><span style="left:2px;top:21px;font-size:13px;color:#000000;font-weight:400;letter-spacing:0.717px">point7</span></div>
<div class="c" style="left:545px;top:253px;width:54px;height:33px"><span style="left:2px;top:1px;font-size:13px;color:#000000;font-weight:400;letter-spacing:0.610px">bullet_</span></div>
<div class="c" style="left:545px;top:253px;width:54px;height:33px"><span style="left:2px;top:21px;font-size:13px;color:#000000;font-weight:400;letter-spacing:0.717px">point8</span></div>
<div class="c" style="left:600px;top:253px;width:54px;height:33px"><span style="left:2px;top:1px;font-size:13px;color:#000000;font-weight:400;letter-spacing:0.610px">bullet_</span></div>
<div class="c" style="left:600px;top:253px;width:54px;height:33px"><span style="left:2px;top:21px;font-size:13px;color:#000000;font-weight:400;letter-spacing:0.717px">point9</span></div>
<div class="c" style="left:655px;top:253px;width:54px;height:33px"><span style="left:2px;top:1px;font-size:13px;color:#000000;font-weight:400;letter-spacing:0.610px">bullet_</span></div>
<div class="c" style="left:655px;top:253px;width:54px;height:33px"><span style="left:2px;top:21px;font-size:13px;color:#000000;font-weight:400;letter-spacing:0.667px">point10</span></div>
<div class="c" style="left:710px;top:253px;width:62px;height:33px"><span style="left:2px;top:1px;font-size:13px;color:#000000;font-weight:400;letter-spacing:0.538px">update_</span></div>
<div class="c" style="left:710px;top:253px;width:62px;height:33px"><span style="left:2px;top:21px;font-size:13px;color:#000000;font-weight:400;letter-spacing:0.550px">delete</span></div>
<div class="c" style="left:773px;top:253px;width:82px;height:33px"><span style="left:2px;top:1px;font-size:13px;color:#000000;font-weight:400;letter-spacing:0.705px">fulfillment_</span></div>
<div class="c" style="left:773px;top:253px;width:82px;height:33px"><span style="left:2px;top:21px;font-size:13px;color:#000000;font-weight:400;letter-spacing:0.521px">center_id</span></div>
<div class="c" style="left:856px;top:253px;width:65px;height:33px"><span style="left:3px;top:1px;font-size:13px;color:#000000;font-weight:400;letter-spacing:0.523px">batteries</span></div>
<div class="c" style="left:856px;top:253px;width:65px;height:33px"><span style="left:9px;top:21px;font-size:13px;color:#000000;font-weight:400;letter-spacing:0.594px">required</span></div>
<div class="c" style="left:922px;top:253px;width:119px;height:33px"><span style="left:3px;top:1px;font-size:13px;color:#000000;font-weight:400;letter-spacing:0.398px">supplier_declared</span></div>
<div class="c" style="left:922px;top:253px;width:119px;height:33px"><span style="left:3px;top:21px;font-size:13px;color:#000000;font-weight:400;letter-spacing:0.390px">_dg_hz_regulation</span></div>
<div class="c" style="left:1042px;top:253px;width:78px;height:33px"><span style="left:2px;top:1px;font-size:13px;color:#000000;font-weight:400;letter-spacing:0.371px">pesticide_</span></div>
<div class="c" style="left:1042px;top:253px;width:78px;height:33px"><span style="left:2px;top:21px;font-size:13px;color:#000000;font-weight:400;letter-spacing:0.528px">marking_ty</span></div>
<div class="c" style="left:1121px;top:253px;width:120px;height:33px"><span style="left:3px;top:1px;font-size:13px;color:#000000;font-weight:400;letter-spacing:0.415px">pesticide_marking</span></div>
<div class="c" style="left:1121px;top:253px;width:120px;height:33px"><span style="left:3px;top:21px;font-size:13px;color:#000000;font-weight:400;letter-spacing:0.502px">_registration_stat</span></div>
<div class="c" style="left:1242px;top:253px;width:100px;height:33px"><span style="left:2px;top:1px;font-size:13px;color:#000000;font-weight:400;letter-spacing:0.439px">pesticide_marki</span></div>
<div class="c" style="left:1242px;top:253px;width:100px;height:33px"><span style="left:2px;top:21px;font-size:13px;color:#000000;font-weight:400;letter-spacing:0.609px">ion_number3</span></div>
<div class="c" style="left:24px;top:287px;width:78px;height:16px"><span style="left:-1px;top:2px;font-size:13.33px;color:#000000;font-weight:400;letter-spacing:-0.3px">E-FABULOUS</span></div>
<div class="c" style="left:160px;top:287px;width:54px;height:16px"><span style="left:1px;top:2px;font-size:13.33px;color:#000000;font-weight:400;">extraction</span></div>
<div class="c" style="left:215px;top:287px;width:54px;height:16px"><span style="left:0px;top:2px;font-size:13.33px;color:#000000;font-weight:400;">n smooth</span></div>
<div class="c" style="left:270px;top:287px;width:54px;height:16px"><span style="left:1px;top:2px;font-size:13.33px;color:#000000;font-weight:400;">perfect for</span></div>
<div class="c" style="left:325px;top:287px;width:54px;height:16px"><span style="left:0px;top:2px;font-size:13.33px;color:#000000;font-weight:400;">skin, oily</span></div>
<div class="c" style="left:380px;top:287px;width:54px;height:16px"><span style="left:0px;top:2px;font-size:13.33px;color:#000000;font-weight:400;">box. Just</span></div>
<div class="c" style="left:703px;top:287px;width:69px;height:16px"><span style="left:2px;top:2px;font-size:13.33px;color:#000000;font-weight:400;letter-spacing:-0.3px">partialupdate</span></div>
<div class="c" style="left:773px;top:287px;width:82px;height:16px"><span style="left:1px;top:2px;font-size:13.33px;color:#000000;font-weight:400;letter-spacing:-0.3px">AMAZON_NA</span></div>
<div class="c" style="left:856px;top:287px;width:65px;height:16px"><span style="left:25px;top:2px;font-size:13.33px;color:#000000;font-weight:400;">No</span></div>
<div class="c" style="left:922px;top:287px;width:119px;height:16px"><span style="left:18px;top:2px;font-size:13.33px;color:#000000;font-weight:400;letter-spacing:-0.05px">Not Applicable</span></div>
<div class="c" style="left:1042px;top:287px;width:78px;height:16px"><span style="left:-2px;top:2px;font-size:13.33px;color:#000000;font-weight:400;letter-spacing:-0.2px">Registration N</span></div>
<div class="c" style="left:1121px;top:287px;width:221px;height:16px"><span style="left:0px;top:2px;font-size:13.33px;color:#000000;font-weight:400;letter-spacing:-0.15px">defined under the U.S. Federal Insecticide</span></div>
<div class="c" style="left:24px;top:304px;width:78px;height:16px"><span style="left:-3px;top:2px;font-size:13.33px;color:#000000;font-weight:400;letter-spacing:-0.3px">LM-CHRCL-83</span></div>
<div class="c" style="left:103px;top:304px;width:56px;height:16px"><span style="left:25px;top:2px;font-size:13.33px;color:#000000;font-weight:400;">0</span></div>
<div class="c" style="left:160px;top:304px;width:54px;height:16px"><span style="left:-2px;top:2px;font-size:13.33px;color:#000000;font-weight:400;">n soap cos</span></div>
<div class="c" style="left:215px;top:304px;width:54px;height:16px"><span style="left:-2px;top:2px;font-size:13.33px;color:#000000;font-weight:400;letter-spacing:-0.25px">sure we do</span></div>
<div class="c" style="left:270px;top:304px;width:54px;height:16px"><span style="left:-2px;top:2px;font-size:13.33px;color:#000000;font-weight:400;">o with an</span></div>
<div class="c" style="left:325px;top:304px;width:54px;height:16px"><span style="left:0px;top:2px;font-size:13.33px;color:#000000;font-weight:400;">tive gift so</span></div>
<div class="c" style="left:380px;top:304px;width:54px;height:16px"><span style="left:-3px;top:2px;font-size:13.33px;color:#000000;font-weight:400;">oressed fra</span></div>
<div class="c" style="left:703px;top:304px;width:69px;height:16px"><span style="left:2px;top:2px;font-size:13.33px;color:#000000;font-weight:400;letter-spacing:-0.3px">partialupdate</span></div>
<div class="c" style="left:773px;top:304px;width:82px;height:16px"><span style="left:12px;top:2px;font-size:13.33px;color:#000000;font-weight:400;letter-spacing:-0.3px">DEFAULT</span></div>
<div class="c" style="left:856px;top:304px;width:65px;height:16px"><span style="left:25px;top:2px;font-size:13.33px;color:#000000;font-weight:400;">No</span></div>
<div class="c" style="left:922px;top:304px;width:119px;height:16px"><span style="left:18px;top:2px;font-size:13.33px;color:#000000;font-weight:400;letter-spacing:-0.05px">Not Applicable</span></div>
<div class="c" style="left:24px;top:321px;width:78px;height:16px"><span style="left:-2px;top:2px;font-size:13.33px;color:#000000;font-weight:400;letter-spacing:-0.3px">M-CHRRYALM</span></div>
<div class="c" style="left:160px;top:321px;width:54px;height:16px"><span style="left:-2px;top:2px;font-size:13.33px;color:#000000;font-weight:400;">n soap cos</span></div>
<div class="c" style="left:215px;top:321px;width:54px;height:16px"><span style="left:-2px;top:2px;font-size:13.33px;color:#000000;font-weight:400;letter-spacing:-0.25px">sure we do</span></div>
<div class="c" style="left:270px;top:321px;width:54px;height:16px"><span style="left:-2px;top:2px;font-size:13.33px;color:#000000;font-weight:400;">o with an</span></div>
<div class="c" style="left:325px;top:321px;width:54px;height:16px"><span style="left:0px;top:2px;font-size:13.33px;color:#000000;font-weight:400;">tive gift so</span></div>
<div class="c" style="left:380px;top:321px;width:54px;height:16px"><span style="left:-3px;top:2px;font-size:13.33px;color:#000000;font-weight:400;">oressed fra</span></div>
<div class="c" style="left:703px;top:321px;width:69px;height:16px"><span style="left:2px;top:2px;font-size:13.33px;color:#000000;font-weight:400;letter-spacing:-0.3px">partialupdate</span></div>
<div class="c" style="left:773px;top:321px;width:82px;height:16px"><span style="left:1px;top:2px;font-size:13.33px;color:#000000;font-weight:400;letter-spacing:-0.3px">AMAZON_NA</span></div>
<div class="c" style="left:856px;top:321px;width:65px;height:16px"><span style="left:25px;top:2px;font-size:13.33px;color:#000000;font-weight:400;">No</span></div>
<div class="c" style="left:922px;top:321px;width:119px;height:16px"><span style="left:18px;top:2px;font-size:13.33px;color:#000000;font-weight:400;letter-spacing:-0.05px">Not Applicable</span></div>
<div class="c" style="left:1042px;top:321px;width:78px;height:16px"><span style="left:-2px;top:2px;font-size:13.33px;color:#000000;font-weight:400;letter-spacing:-0.2px">Registration N</span></div>
<div class="c" style="left:1121px;top:321px;width:221px;height:16px"><span style="left:0px;top:2px;font-size:13.33px;color:#000000;font-weight:400;letter-spacing:-0.15px">defined under the U.S. Federal Insecticide</span></div>
<div class="r" style="left:102px;top:196px;width:1px;height:205px;background:#9B9B9B;"></div>
</body></html>
